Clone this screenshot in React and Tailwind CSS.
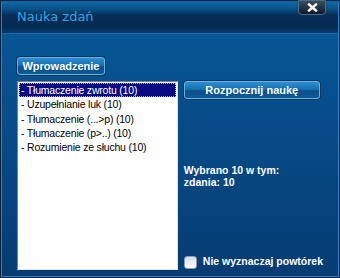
import React from 'react';

const items = [
    'Tłumaczenie zwrotu (10)',
    'Uzupełnianie luk (10)',
    'Tłumaczenie (...>p) (10)',
    'Tłumaczenie (p>..) (10)',
    'Rozumienie ze słuchu (10)',
];

const GlossButton = ({ children, className }) => (
    <button
        className={`flex items-center justify-center rounded-[3px] border border-[#5fb3e6] bg-[linear-gradient(#2d8fd0_0%,#1870b0_45%,#0a4f88_55%,#0b5c98_100%)] text-[11px] font-bold text-white [font-family:'Liberation_Sans',Arial,sans-serif] shadow-[0_0_0_1px_#07335e] ${className}`}
    >
        {children}
    </button>
);

export default function App() {
    return (
        <div className="w-[340px] h-[278px] bg-[#052040] p-px">
            <div className="flex h-full flex-col border border-[#2583c8] border-t-0 bg-[linear-gradient(#07599a,#063c72)]">
                <div className="relative flex h-[33px] items-center bg-[linear-gradient(#0c6aa6_0%,#0a5288_25%,#062e58_45%,#052a52_80%,#073b6c_100%)] border-b border-[#1b6ab0] pl-[15px]">
                    <span className="text-[13px] text-[#2aa8e4] [font-family:'DejaVu_Sans',sans-serif]">Nauka zdań</span>
                    <div className="absolute right-[12px] top-[-1px] flex h-[15px] w-[28px] items-center justify-center rounded-b-[4px] border border-[#4a6c88] bg-[linear-gradient(#3a4e60,#0e1a26)]">
                        <svg width="11" height="9" viewBox="0 0 11 9">
                            <path d="M2 1.5 L9 7.5 M9 1.5 L2 7.5" stroke="#ffffff" strokeWidth="2.4" strokeLinecap="square" />
                        </svg>
                    </div>
                </div>
                <div className="flex flex-1 flex-col pl-[15px] pr-[15px] pt-[23px] pb-[6px]">
                    <GlossButton className="h-[18px] w-[88px]">Wprowadzenie</GlossButton>
                    <div className="mt-[6px] flex flex-1 gap-[6px]">
                        <div className="w-[164px] border border-t-[#808080] border-l-[#808080] border-r-[#e0e0e0] border-b-[#e0e0e0] bg-white pt-px text-[10.5px] leading-[12.3px] tracking-[-0.2px] [font-family:'Liberation_Sans',Arial,sans-serif]">
                            {items.map((item, i) => (
                                <div
                                    key={item}
                                    className={i === 0 ? 'mx-px border border-dotted border-[#d0c060] bg-[#0a0a84] pl-px text-white' : 'mx-px border border-transparent pl-px text-black'}
                                >
                                    - {item}
                                </div>
                            ))}
                        </div>
                        <div className="flex flex-1 flex-col">
                            <GlossButton className="h-[18px] w-[136px]">Rozpocznij naukę</GlossButton>
                            <div className="mt-[65px] text-[10.5px] font-bold leading-[12px] text-white [font-family:'Liberation_Sans',Arial,sans-serif]">
                                <div>Wybrano 10 w tym:</div>
                                <div>zdania: 10</div>
                            </div>
                            <label className="mt-auto flex items-center gap-[6px] whitespace-nowrap text-[10.5px] font-bold text-white [font-family:'Liberation_Sans',Arial,sans-serif]">
                                <span className="h-[13px] w-[13px] shrink-0 rounded-[3px] border border-[#8aa0b8] bg-[linear-gradient(#d8dde3,#ffffff)]" />
                                Nie wyznaczaj powtórek
                            </label>
                        </div>
                    </div>
                </div>
            </div>
        </div>
    );
}
